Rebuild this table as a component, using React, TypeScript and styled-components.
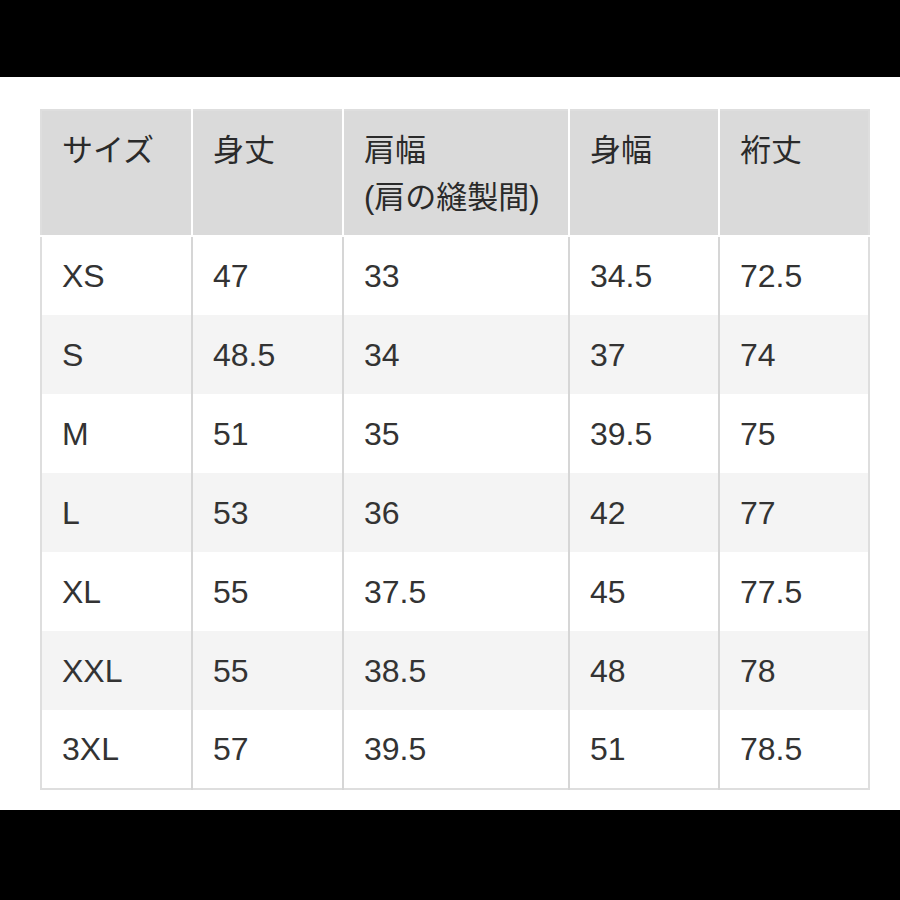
import * as React from 'react';
import styled, {createGlobalStyle} from 'styled-components';

const GlobalStyle = createGlobalStyle`
  html, body {
    margin: 0;
    padding: 0;
    background: #000;
  }
  body {
    font-family: "Liberation Sans", "Noto Sans CJK JP", sans-serif;
  }
`;

const Screen = styled.div`
  width: 900px;
  height: 900px;
  display: flex;
  flex-direction: column;
  background: #000;
`;

const Bar = styled.div<{$h: number}>`
  height: ${p => p.$h}px;
  flex: 0 0 auto;
  background: #000;
`;

const Sheet = styled.div`
  flex: 1 1 auto;
  background: #fff;
  padding: 32px 0 0 40px;
`;

const Table = styled.table`
  width: 828px;
  table-layout: fixed;
  border-collapse: collapse;
  border: 2px solid #dedede;
  color: #333;
`;

const HeadCell = styled.th`
  height: 126px;
  box-sizing: border-box;
  padding: 16px 0 0 20px;
  vertical-align: top;
  text-align: left;
  font-weight: 400;
  font-size: 31px;
  line-height: 47px;
  color: #2a2a2a;
  background: #dadada;
  border-left: 2px solid #fff;
  border-bottom: 2px solid #fff;
  &:first-child {
    border-left: none;
  }
`;

const Row = styled.tr<{$shade: boolean}>`
  background: ${p => (p.$shade ? '#f4f4f4' : '#fff')};
`;

const Cell = styled.td`
  height: 79px;
  box-sizing: border-box;
  padding: 0 0 0 20px;
  vertical-align: middle;
  font-size: 32px;
  line-height: 36px;
  border-left: 2px solid #d6d6d6;
  &:first-child {
    border-left: none;
  }
`;

const columns = [
  {label: ['サイズ'], width: 151},
  {label: ['身丈'], width: 151},
  {label: ['肩幅', '(肩の縫製間)'], width: 226},
  {label: ['身幅'], width: 150},
  {label: ['裄丈'], width: 150},
];

const rows = [
  ['XS', '47', '33', '34.5', '72.5'],
  ['S', '48.5', '34', '37', '74'],
  ['M', '51', '35', '39.5', '75'],
  ['L', '53', '36', '42', '77'],
  ['XL', '55', '37.5', '45', '77.5'],
  ['XXL', '55', '38.5', '48', '78'],
  ['3XL', '57', '39.5', '51', '78.5'],
];

export default function App() {
  return (
    <Screen>
      <GlobalStyle />
      <Bar $h={77} />
      <Sheet>
        <Table>
          <colgroup>
            {columns.map((c, i) => <col key={i} style={{width: c.width}} />)}
          </colgroup>
          <thead>
            <tr>
              {columns.map((c, i) => (
                <HeadCell key={i}>
                  {c.label.map((line, j) => <div key={j}>{line}</div>)}
                </HeadCell>
              ))}
            </tr>
          </thead>
          <tbody>
            {rows.map((r, i) => (
              <Row key={r[0]} $shade={i % 2 === 1}>
                {r.map((v, j) => <Cell key={j}>{v}</Cell>)}
              </Row>
            ))}
          </tbody>
        </Table>
      </Sheet>
      <Bar $h={90} />
    </Screen>
  );
}
